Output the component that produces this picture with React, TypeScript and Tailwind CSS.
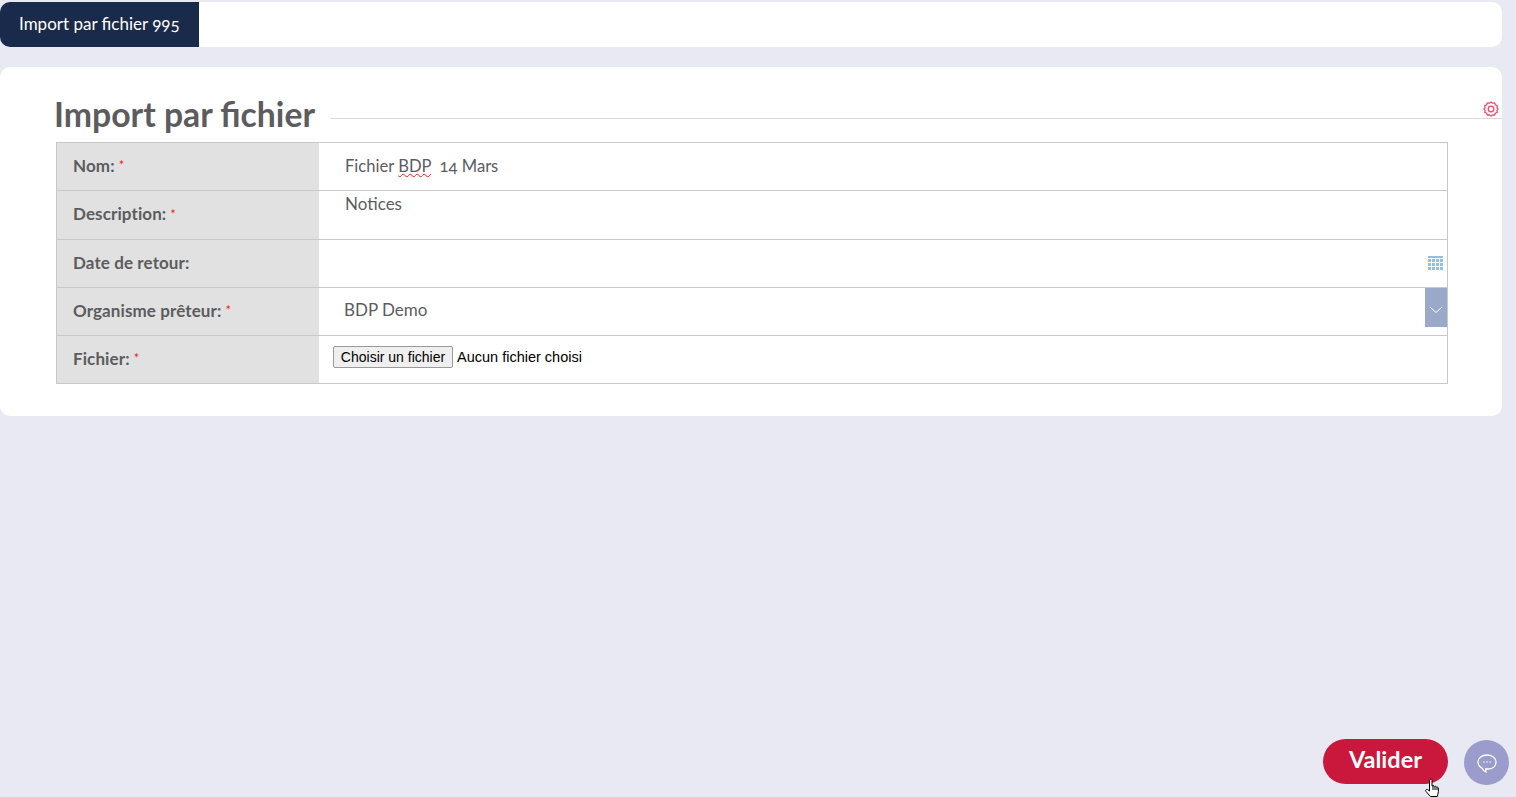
import React from "react";

const font = "font-['Lato','Noto_Sans',sans-serif]";

function Star() {
  return <span className="ml-1 text-[13px] leading-none font-normal text-[#e8213f]">*</span>;
}

function Row({
  label,
  required,
  h,
  last,
  children,
}: {
  label: string;
  required?: boolean;
  h: string;
  last?: boolean;
  children?: React.ReactNode;
}) {
  return (
    <div className={`flex ${h} ${last ? "" : "border-b border-[#c8c8c8]"}`}>
      <div className="w-[262px] shrink-0 bg-[#e1e1e1] pl-4 pb-[2px] flex items-center text-[17px] tracking-[0.1px] font-bold text-[#5c5c5f]">
        {label}:{required && <Star />}
      </div>
      <div className="relative flex-1 flex items-center text-[17px] text-[#5c5c5f]">{children}</div>
    </div>
  );
}

function Gear() {
  return (
    <svg width="16" height="16" viewBox="0 0 16 16" fill="none" stroke="#f0496d" strokeWidth="1.300">
      <path d="M8 1l1.600 1.200 2-.2.800 1.800 1.800.9-.2 2L15 8l-1 1.400.2 2-1.800.8-.8 1.800-2-.2L8 15l-1.600-1.200-2 .2-.8-1.800-1.800-.8.2-2L1 8l1-1.300-.2-2 1.800-.9.800-1.800 2 .2z" />
      <circle cx="8" cy="8" r="2.800" />
    </svg>
  );
}

function CalendarIcon() {
  return (
    <svg width="15" height="14" viewBox="0 0 15 14" fill="#8fc1e6">
      <rect x="0" y="0" width="15" height="2" />
      <rect x="0" y="3" width="3" height="3" />
      <rect x="4" y="3" width="3" height="3" />
      <rect x="8" y="3" width="3" height="3" />
      <rect x="12" y="3" width="3" height="3" />
      <rect x="0" y="7" width="3" height="3" />
      <rect x="4" y="7" width="3" height="3" />
      <rect x="8" y="7" width="3" height="3" />
      <rect x="12" y="7" width="3" height="3" />
      <rect x="0" y="11" width="3" height="3" />
      <rect x="4" y="11" width="3" height="3" />
      <rect x="8" y="11" width="3" height="3" />
      <rect x="12" y="11" width="3" height="3" />
    </svg>
  );
}

function HandCursor() {
  return (
    <svg width="18" height="20" viewBox="0 0 18 20" fill="#fff" stroke="#000" strokeWidth="1">
      <path d="M6 1.500c.8-.8 2-.3 2 .8V8l1-.4c.7-.2 1.300.2 1.400.8l.2.2c.6-.5 1.700-.2 1.900.6.700-.4 1.700 0 1.900.9.100 2 0 4.400-.6 6.400l-.5 2H6.500L2 13.500c-.5-.7-.4-1.500.2-1.900.6-.4 1.300-.2 1.800.3L5.500 13V2.500z" />
      <path d="M9 8v4M11 9v3M13 9.500V12" />
    </svg>
  );
}

export default function App() {
  return (
    <div className={`${font} relative h-[797px] overflow-hidden bg-[#e8e9f3] pt-[2px] pr-[14px]`}>
      <div className="h-[45px] rounded-[10px] bg-white overflow-hidden">
        <div className="w-[199px] h-full bg-[#1a2a4a] text-white text-[17px] flex items-center pl-[19px] pb-[1px] oldstyle-nums">
          Import par fichier 995
        </div>
      </div>

      <div className="relative mt-5 h-[349px] rounded-[10px] bg-white pt-[27px]">
        <div className="flex items-center pl-[54px] h-[42px]">
          <h1 className="text-[33.750px] font-bold text-[#5c5c5f] leading-none whitespace-nowrap">Import par fichier</h1>
          <div className="flex-1 ml-4 mt-[7px] border-t border-[#d9d9d9]" />
        </div>
        <div className="absolute right-[3px] top-[34px]">
          <Gear />
        </div>

        <div className="ml-[56px] mt-[6px] w-[1392px] border border-[#c8c8c8]">
          <Row label="Nom" required h="h-[48px]">
            <span className="pl-[26px] text-[16.600px] oldstyle-nums">
              Fichier <span className="underline decoration-wavy decoration-[#e02020] decoration-1">BDP</span>&nbsp; 14 Mars
            </span>
          </Row>
          <Row label="Description" required h="h-[49px]">
            <span className="pl-[26px] self-start">Notices</span>
          </Row>
          <Row label="Date de retour" h="h-[48px]">
            <div className="ml-auto mr-[4px] pb-[2px]">
              <CalendarIcon />
            </div>
          </Row>
          <Row label="Organisme prêteur" required h="h-[48px]">
            <span className="pl-[25px] pb-[3px]">BDP Demo</span>
            <div className="ml-auto h-[39px] w-[22px] self-start bg-[#9aa8c9] pt-[5px] flex items-center justify-center">
              <svg width="14" height="8" viewBox="0 0 14 8" fill="none" stroke="#fff" strokeWidth="1">
                <path d="M1 1l6 5.500L13 1" />
              </svg>
            </div>
          </Row>
          <Row label="Fichier" required h="h-[47px]" last>
            <div className="pl-[14px] pb-[5px] flex items-center font-['Liberation_Sans',sans-serif] text-[14px] text-black">
              <button className="h-[22px] w-[120px] border border-[#9a9a9a] rounded-[2px] bg-[#efefef]">Choisir un fichier</button>
              <span className="ml-1 text-[14.500px] leading-[22px]">Aucun fichier choisi</span>
            </div>
          </Row>
        </div>
      </div>

      <button className="absolute left-[1323px] top-[739px] w-[125px] h-[45px] rounded-full bg-[#c9183c] text-white text-[23.500px] leading-none pb-[3px] font-bold">
        Valider
      </button>
      <div className="absolute left-[1464px] top-[740px] w-[45px] h-[45px] rounded-full bg-[#9b9ccb] flex items-center justify-center">
        <svg width="22" height="22" viewBox="0 0 22 22" fill="none" stroke="#fff" strokeWidth="1.300">
          <path d="M11 3c5 0 9 2.800 9 7s-3 7-8 7c-.8 0-1.500 0-2.200-.1 0 1.200 0 2.100.2 3.100-1.700-.6-3-1.700-3.800-3.700C3.700 15 2 13 2 10c0-4.200 4-7 9-7z" />
          <path d="M7.500 10h1M10.500 10h1M13.500 10h1" strokeWidth="1.500" />
        </svg>
      </div>
      <div className="absolute left-[1424px] top-[778px]">
        <HandCursor />
      </div>
    </div>
  );
}
